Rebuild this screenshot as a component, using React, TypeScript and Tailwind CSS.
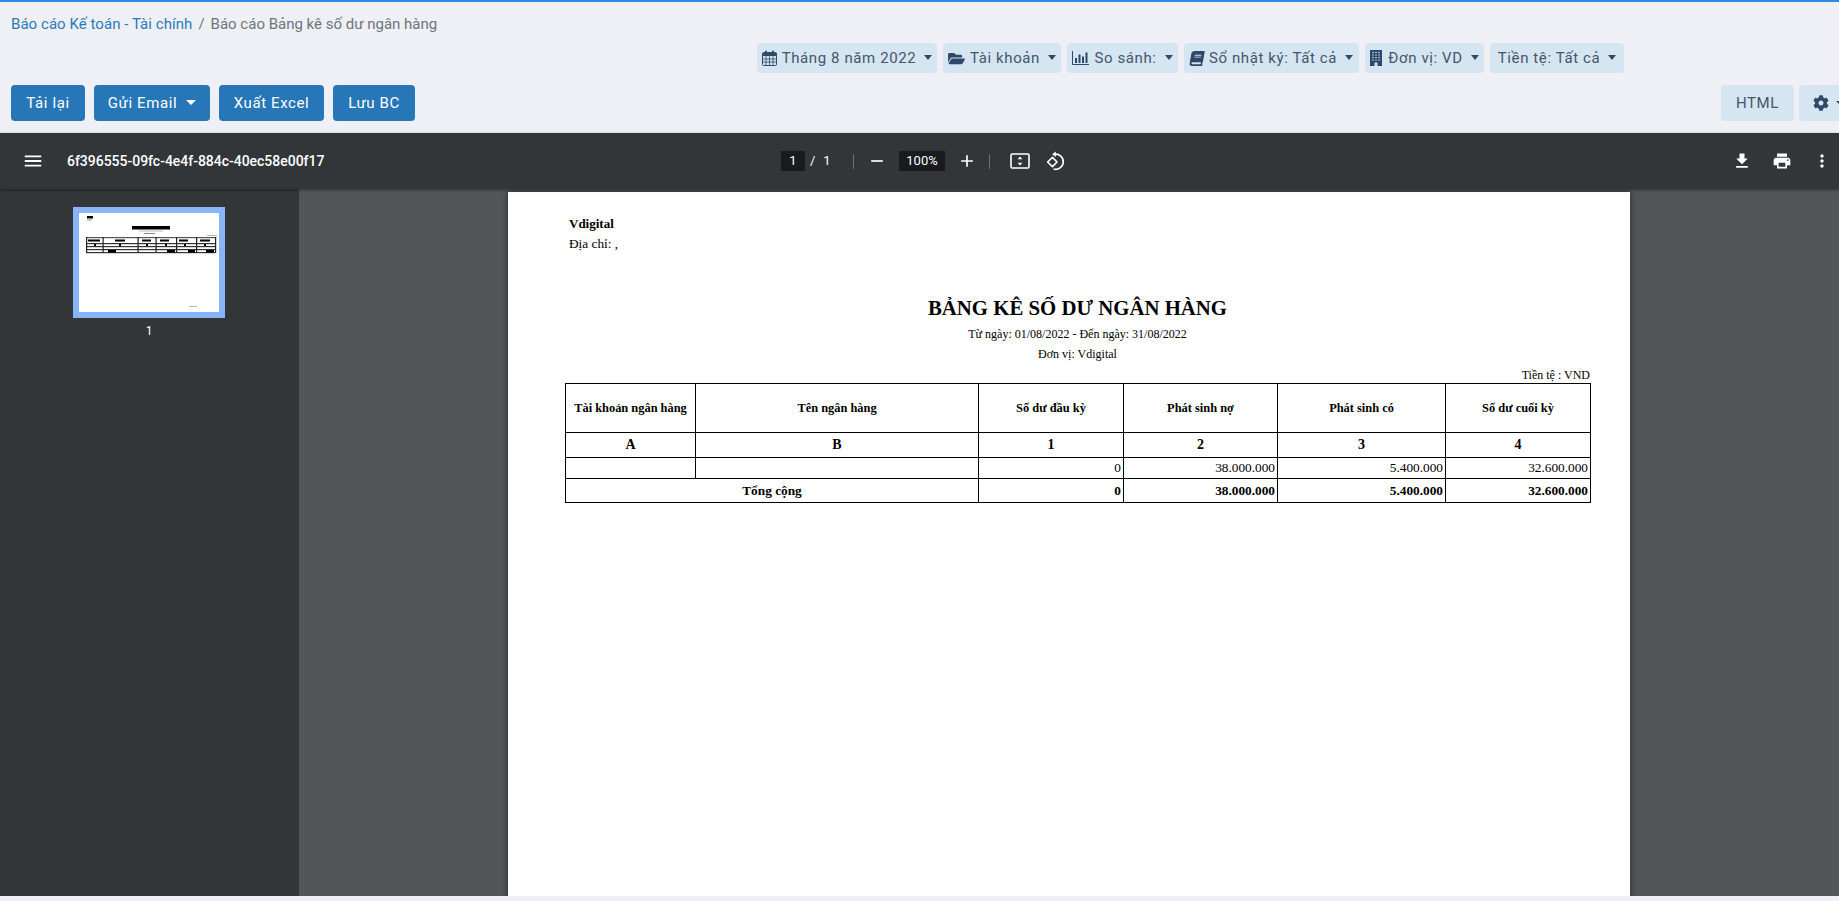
import React from "react";
import { FaFolderOpen, FaBook, FaCog } from "react-icons/fa";
import { MdMenu, MdFileDownload, MdPrint, MdMoreVert, MdRemove, MdAdd } from "react-icons/md";

const Caret = () => (
  <span className="ml-[8px] inline-block w-0 h-0 border-x-[4.5px] border-x-transparent border-t-[5px] border-t-[#2f4a68] -translate-y-[1px]" />
);

function Filter({ icon, label, w }: { icon?: React.ReactNode; label: string; w: string }) {
  return (
    <div className={`${w} h-[30px] flex items-center justify-center rounded-[4px] bg-[#d5e5f2] text-[#44566c] text-[15px] tracking-[0.6px] whitespace-nowrap`}>
      {icon}
      <span>{label}</span>
      <Caret />
    </div>
  );
}

function Btn({ children, w }: { children: React.ReactNode; w: string }) {
  return (
    <div className={`${w} h-[36px] flex items-center justify-center rounded-[4px] bg-[#2777b8] text-white text-[15px] tracking-[0.6px] whitespace-nowrap`}>
      {children}
    </div>
  );
}

const CalendarIcon = () => (
  <svg className="mr-[5px] shrink-0" width="15" height="16" viewBox="0 0 15 16" fill="none">
    <rect x="0.5" y="2.5" width="14" height="13" rx="1" stroke="#2f4a68" />
    <rect x="1" y="3" width="13" height="3" fill="#2f4a68" />
    <rect x="3" y="0.5" width="2" height="4" rx="1" fill="#2f4a68" />
    <rect x="10" y="0.5" width="2" height="4" rx="1" fill="#2f4a68" />
    <path d="M1 9H14M1 12H14M4 6V15M7.5 6V15M11 6V15" stroke="#2f4a68" strokeWidth="0.8" />
  </svg>
);

const ChartIcon = () => (
  <svg className="mr-[5px] shrink-0" width="17" height="14" viewBox="0 0 17 14" fill="none">
    <path d="M0.5 0V13.5H17" stroke="#2f4a68" strokeWidth="1" />
    <rect x="3" y="7" width="2" height="5" fill="#2f4a68" />
    <rect x="6.5" y="3.5" width="2" height="8.5" fill="#2f4a68" />
    <rect x="10" y="5.5" width="2" height="6.5" fill="#2f4a68" />
    <rect x="13.5" y="1.5" width="2" height="10.5" fill="#2f4a68" />
  </svg>
);

const BuildingIcon = () => (
  <svg className="mr-[6px] shrink-0" width="12" height="16" viewBox="0 0 12 16">
    <rect width="12" height="16" fill="#2f4a68" />
    <path d="M2 2.5H10M2 5H10M2 7.5H10M2 10H10" stroke="#a9c2d8" strokeWidth="1" strokeDasharray="2 1" />
    <rect x="4.5" y="12.5" width="3" height="3.5" fill="#d5e5f2" />
  </svg>
);

const Thumb = () => (
  <svg width="140" height="99" viewBox="0 0 140 99" className="block bg-white">
    <g fill="#000">
      <rect x="8" y="3" width="6" height="2.5" />
      <rect x="8" y="6.5" width="5" height="1" fill="#999" />
      <rect x="53" y="13" width="38" height="3.5" />
      <rect x="60" y="17.5" width="24" height="1" fill="#bbb" />
      <rect x="65" y="20" width="11" height="1" fill="#888" />
      <rect x="128" y="22" width="10" height="1" fill="#bbb" />
      <rect x="7" y="24" width="129" height="1.2" fill="#555" />
      <rect x="7" y="30" width="129" height="1.2" fill="#333" />
      <rect x="7" y="33" width="129" height="1.2" fill="#333" />
      <rect x="7" y="36" width="129" height="1.2" fill="#333" />
      <rect x="7" y="39" width="129" height="1.2" fill="#333" />
      {[7, 23.5, 58.5, 76.5, 97, 117, 136].map((x) => (
        <rect key={x} x={x} y="24" width="1.2" height="16" fill="#222" />
      ))}
      <rect x="9" y="26.5" width="12" height="2" />
      <rect x="36" y="26.5" width="10" height="2" />
      <rect x="63" y="26.5" width="9" height="2" />
      <rect x="81" y="26.5" width="9" height="2" />
      <rect x="100" y="26.5" width="9" height="2" />
      <rect x="121" y="26.5" width="10" height="2" />
      <rect x="15" y="31" width="2" height="2" />
      <rect x="40" y="31" width="2" height="2" />
      <rect x="67" y="31" width="2" height="2" />
      <rect x="86" y="31" width="2" height="2" />
      <rect x="105" y="31" width="2" height="2" />
      <rect x="125" y="31" width="2" height="2" />
      <rect x="29" y="37" width="8" height="2.5" />
      <rect x="88" y="37" width="8" height="2.5" />
      <rect x="109" y="37" width="7" height="2.5" />
      <rect x="127" y="37" width="8" height="2.5" />
      <rect x="110" y="93" width="8" height="1" fill="#bbb" />
    </g>
  </svg>
);

const thB = "border border-black font-bold text-[12.4px] leading-[16px] text-center p-0";
const tdB = "border border-black p-0 pr-[2px] leading-[16px]";

export default function App() {
  return (
    <div className="h-[901px] w-full overflow-hidden flex flex-col bg-[#eef0f6] font-['Roboto',sans-serif]">
      <div className="h-[2px] shrink-0 bg-[#2e8be6]" />

      <div className="h-[41px] shrink-0 pl-[11px] pt-[14px] flex text-[15px] leading-[16px] whitespace-nowrap">
        <span className="text-[#2a7ab9] tracking-[0.05px]">Báo cáo Kế toán - Tài chính</span>
        <span className="text-[#6c757d] mx-[6px]">/</span>
        <span className="text-[#6c757d]">Báo cáo Bảng kê số dư ngân hàng</span>
      </div>

      <div className="h-[30px] shrink-0 flex justify-end gap-[6px] pr-[215px]">
        <Filter w="w-[180px]" label="Tháng 8 năm 2022" icon={<CalendarIcon />} />
        <Filter w="w-[118px]" label="Tài khoản" icon={<FaFolderOpen className="w-[17px] h-[15px] mr-[5px] text-[#2f4a68]" />} />
        <Filter w="w-[111px]" label="So sánh:" icon={<ChartIcon />} />
        <Filter w="w-[175px]" label="Sổ nhật ký: Tất cả" icon={<FaBook className="w-[14px] h-[15px] mr-[5px] text-[#2f4a68] -skew-x-[10deg]" />} />
        <Filter w="w-[119px]" label="Đơn vị: VD" icon={<BuildingIcon />} />
        <Filter w="w-[134px]" label="Tiền tệ: Tất cả" />
      </div>

      <div className="h-[48px] shrink-0 pt-[12px] pl-[11px] flex gap-[9px]">
        <Btn w="w-[74px]">Tải lại</Btn>
        <Btn w="w-[116px]">
          Gửi Email
          <span className="ml-[9px] inline-block w-0 h-0 border-x-[5px] border-x-transparent border-t-[5px] border-t-white -translate-y-[1px]" />
        </Btn>
        <Btn w="w-[105px]">Xuất Excel</Btn>
        <Btn w="w-[82px]">Lưu BC</Btn>
        <div className="ml-auto flex gap-[5px] -mr-[20px]">
          <div className="w-[73px] h-[36px] rounded-[4px] bg-[#d5e5f2] text-[#44566c] text-[15px] tracking-[0.6px] flex items-center justify-center">HTML</div>
          <div className="w-[60px] h-[36px] rounded-[4px] bg-[#d5e5f2] flex items-center pl-[14px]">
            <FaCog className="w-[16px] h-[16px] text-[#2f4a68]" />
            <span className="ml-[7px] inline-block w-0 h-0 border-x-[5px] border-x-transparent border-t-[5px] border-t-[#2f4a68]" />
          </div>
        </div>
      </div>

      <div className="h-[12px] shrink-0" />

      <div className="relative z-10 h-[56px] shrink-0 bg-[#323639] shadow-[0_1px_3px_rgba(0,0,0,0.4)] flex items-center text-white">
        <div className="w-[781px] shrink-0 flex items-center pl-[22px]">
          <MdMenu className="w-[22px] h-[22px] mr-[23px]" />
          <span className="text-[14px] font-medium tracking-[-0.02px]">6f396555-09fc-4e4f-884c-40ec58e00f17</span>
        </div>
        <div className="flex items-center text-[13px]">
          <div className="w-[24px] h-[20px] bg-[#191b1c] flex items-center justify-center">1</div>
          <span className="ml-[5px] w-[12px]">/</span>
          <span className="w-[10px] text-center">1</span>
          <div className="ml-[21px] w-px h-[15px] bg-[#6b6f72]" />
          <MdRemove className="ml-[13px] w-[20px] h-[20px]" />
          <div className="ml-[12px] w-[46px] h-[20px] bg-[#191b1c] flex items-center justify-center">100%</div>
          <MdAdd className="ml-[12px] w-[20px] h-[20px]" />
          <div className="ml-[12px] w-px h-[15px] bg-[#6b6f72]" />
          <svg className="ml-[20px]" width="20" height="16" viewBox="0 0 20 16" fill="none">
            <rect x="1" y="1" width="18" height="14" rx="1.2" stroke="#fff" strokeWidth="1.6" />
            <path d="M10 3.5 L7.6 6.2 H12.4 Z M10 12.5 L7.6 9.8 H12.4 Z" fill="#fff" />
          </svg>
          <svg className="ml-[16px]" width="20" height="20" viewBox="0 0 20 20" fill="none">
            <path d="M1.6 11 L6.5 6.4 L11 11 L6.5 15.6 Z" stroke="#fff" strokeWidth="1.6" strokeLinejoin="round" />
            <path d="M8.5 3.2 A7.6 7.6 0 1 1 7.5 18" stroke="#fff" strokeWidth="1.6" />
            <path d="M9.8 0.4 V6 L6.2 3.2 Z" fill="#fff" />
          </svg>
        </div>
        <div className="ml-auto flex items-center pr-[7px] gap-[20px]">
          <MdFileDownload className="w-[20px] h-[20px]" />
          <MdPrint className="w-[20px] h-[20px]" />
          <MdMoreVert className="w-[20px] h-[20px]" />
        </div>
      </div>

      <div className="h-[707px] shrink-0 flex">
        <aside className="w-[299px] shrink-0 bg-[#323639] pt-[18px] flex flex-col items-center pr-[1px]">
          <div className="border-[6px] border-[#8ab4f8]">
            <div className="blur-[0.6px]">
              <Thumb />
            </div>
          </div>
          <div className="mt-[5px] text-white text-[12px] leading-[16px]">1</div>
        </aside>
        <main className="flex-1 overflow-hidden bg-[#525659] flex justify-center pl-[1px] pr-[1px] pt-[3px]">
          <div className="w-[1122px] h-[720px] shrink-0 bg-white shadow-[0_0_6px_rgba(0,0,0,0.55)] pl-[57px] pr-[40px] font-['Liberation_Serif',serif] text-black">
            <div className="pl-[4px] pt-[24px] text-[13px] leading-[16px] font-bold">Vdigital</div>
            <div className="pl-[4px] pt-[4px] text-[13.3px] leading-[16px]">Địa chỉ: ,</div>
            <div className="mt-[42px] text-center text-[20.8px] leading-[28px] font-bold">BẢNG KÊ SỐ DƯ NGÂN HÀNG</div>
            <div className="mt-[4px] text-center text-[12px] leading-[16px]">Từ ngày: 01/08/2022 - Đến ngày: 31/08/2022</div>
            <div className="mt-[4px] text-center text-[12px] leading-[16px]">Đơn vị: Vdigital</div>
            <div className="mt-[6px] text-right text-[12px] leading-[14px]">Tiền tệ : VND</div>
            <table className="mt-[1px] w-[1025px] table-fixed border-collapse">
              <colgroup>
                <col className="w-[130px]" />
                <col className="w-[283px]" />
                <col className="w-[145px]" />
                <col className="w-[154px]" />
                <col className="w-[168px]" />
                <col className="w-[145px]" />
              </colgroup>
              <tbody>
                <tr className="h-[49px]">
                  <td className={thB}>Tài khoản ngân hàng</td>
                  <td className={thB}>Tên ngân hàng</td>
                  <td className={thB}>Số dư đầu kỳ</td>
                  <td className={thB}>Phát sinh nợ</td>
                  <td className={thB}>Phát sinh có</td>
                  <td className={thB}>Số dư cuối kỳ</td>
                </tr>
                <tr className="h-[25px]">
                  {["A", "B", "1", "2", "3", "4"].map((c) => (
                    <td key={c} className={`${thB} !text-[14px]`}>{c}</td>
                  ))}
                </tr>
                <tr className="h-[21px] text-[13.3px] text-right">
                  <td className="border border-black p-0" />
                  <td className="border border-black p-0" />
                  <td className={tdB}>0</td>
                  <td className={tdB}>38.000.000</td>
                  <td className={tdB}>5.400.000</td>
                  <td className={tdB}>32.600.000</td>
                </tr>
                <tr className="h-[24px] text-[13.3px] font-bold text-right">
                  <td colSpan={2} className="border border-black p-0 text-center leading-[16px]">Tổng cộng</td>
                  <td className={tdB}>0</td>
                  <td className={tdB}>38.000.000</td>
                  <td className={tdB}>5.400.000</td>
                  <td className={tdB}>32.600.000</td>
                </tr>
              </tbody>
            </table>
          </div>
        </main>
      </div>
    </div>
  );
}
